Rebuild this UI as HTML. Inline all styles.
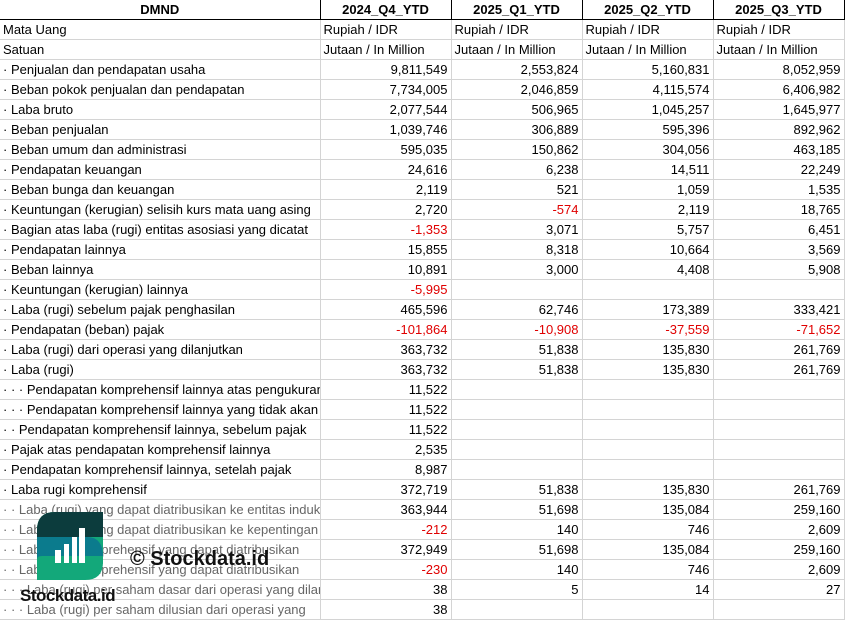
<!DOCTYPE html>
<html><head><meta charset="utf-8"><style>
body{margin:0;width:845px;height:621px;overflow:hidden;background:#fff;font-family:"Liberation Sans",Arial,sans-serif;font-size:13px;color:#000;position:relative}
table{border-collapse:collapse;table-layout:fixed;position:absolute;left:0;top:0;width:844px}
td{height:19px;padding:0 3px;border-right:1px solid #d4d4d4;border-bottom:1px solid #d4d4d4;white-space:nowrap;overflow:hidden;line-height:19px}
td.n{text-align:right}
tr.h td{font-weight:bold;text-align:center;border-right:1px solid #000;border-bottom:1px solid #000}
.r{color:#e00000}
.wm{position:absolute;left:130px;top:548px;font-weight:bold;font-size:20px;color:#111}
.wm2{position:absolute;left:20px;top:586px;font-weight:bold;font-size:17px;color:#111;letter-spacing:-0.5px}
</style></head><body>
<table>
<colgroup><col style="width:320px"><col style="width:131px"><col style="width:131px"><col style="width:131px"><col style="width:131px"></colgroup>
<tr class="h"><td>DMND</td><td>2024_Q4_YTD</td><td>2025_Q1_YTD</td><td>2025_Q2_YTD</td><td>2025_Q3_YTD</td></tr>
<tr><td>Mata Uang</td><td>Rupiah / IDR</td><td>Rupiah / IDR</td><td>Rupiah / IDR</td><td>Rupiah / IDR</td></tr>
<tr><td>Satuan</td><td>Jutaan / In Million</td><td>Jutaan / In Million</td><td>Jutaan / In Million</td><td>Jutaan / In Million</td></tr>
<tr><td>· Penjualan dan pendapatan usaha</td><td class="n">9,811,549</td><td class="n">2,553,824</td><td class="n">5,160,831</td><td class="n">8,052,959</td></tr>
<tr><td>· Beban pokok penjualan dan pendapatan</td><td class="n">7,734,005</td><td class="n">2,046,859</td><td class="n">4,115,574</td><td class="n">6,406,982</td></tr>
<tr><td>· Laba bruto</td><td class="n">2,077,544</td><td class="n">506,965</td><td class="n">1,045,257</td><td class="n">1,645,977</td></tr>
<tr><td>· Beban penjualan</td><td class="n">1,039,746</td><td class="n">306,889</td><td class="n">595,396</td><td class="n">892,962</td></tr>
<tr><td>· Beban umum dan administrasi</td><td class="n">595,035</td><td class="n">150,862</td><td class="n">304,056</td><td class="n">463,185</td></tr>
<tr><td>· Pendapatan keuangan</td><td class="n">24,616</td><td class="n">6,238</td><td class="n">14,511</td><td class="n">22,249</td></tr>
<tr><td>· Beban bunga dan keuangan</td><td class="n">2,119</td><td class="n">521</td><td class="n">1,059</td><td class="n">1,535</td></tr>
<tr><td>· Keuntungan (kerugian) selisih kurs mata uang asing</td><td class="n">2,720</td><td class="n r">-574</td><td class="n">2,119</td><td class="n">18,765</td></tr>
<tr><td>· Bagian atas laba (rugi) entitas asosiasi yang dicatat</td><td class="n r">-1,353</td><td class="n">3,071</td><td class="n">5,757</td><td class="n">6,451</td></tr>
<tr><td>· Pendapatan lainnya</td><td class="n">15,855</td><td class="n">8,318</td><td class="n">10,664</td><td class="n">3,569</td></tr>
<tr><td>· Beban lainnya</td><td class="n">10,891</td><td class="n">3,000</td><td class="n">4,408</td><td class="n">5,908</td></tr>
<tr><td>· Keuntungan (kerugian) lainnya</td><td class="n r">-5,995</td><td></td><td></td><td></td></tr>
<tr><td>· Laba (rugi) sebelum pajak penghasilan</td><td class="n">465,596</td><td class="n">62,746</td><td class="n">173,389</td><td class="n">333,421</td></tr>
<tr><td>· Pendapatan (beban) pajak</td><td class="n r">-101,864</td><td class="n r">-10,908</td><td class="n r">-37,559</td><td class="n r">-71,652</td></tr>
<tr><td>· Laba (rugi) dari operasi yang dilanjutkan</td><td class="n">363,732</td><td class="n">51,838</td><td class="n">135,830</td><td class="n">261,769</td></tr>
<tr><td>· Laba (rugi)</td><td class="n">363,732</td><td class="n">51,838</td><td class="n">135,830</td><td class="n">261,769</td></tr>
<tr><td>· · · Pendapatan komprehensif lainnya atas pengukuran</td><td class="n">11,522</td><td></td><td></td><td></td></tr>
<tr><td>· · · Pendapatan komprehensif lainnya yang tidak akan</td><td class="n">11,522</td><td></td><td></td><td></td></tr>
<tr><td>· · Pendapatan komprehensif lainnya, sebelum pajak</td><td class="n">11,522</td><td></td><td></td><td></td></tr>
<tr><td>· Pajak atas pendapatan komprehensif lainnya</td><td class="n">2,535</td><td></td><td></td><td></td></tr>
<tr><td>· Pendapatan komprehensif lainnya, setelah pajak</td><td class="n">8,987</td><td></td><td></td><td></td></tr>
<tr><td>· Laba rugi komprehensif</td><td class="n">372,719</td><td class="n">51,838</td><td class="n">135,830</td><td class="n">261,769</td></tr>
<tr><td style="color:#666">· · Laba (rugi) yang dapat diatribusikan ke entitas induk</td><td class="n">363,944</td><td class="n">51,698</td><td class="n">135,084</td><td class="n">259,160</td></tr>
<tr><td style="color:#666">· · Laba (rugi) yang dapat diatribusikan ke kepentingan</td><td class="n r">-212</td><td class="n">140</td><td class="n">746</td><td class="n">2,609</td></tr>
<tr><td style="color:#666">· · Laba rugi komprehensif yang dapat diatribusikan</td><td class="n">372,949</td><td class="n">51,698</td><td class="n">135,084</td><td class="n">259,160</td></tr>
<tr><td style="color:#666">· · Laba rugi komprehensif yang dapat diatribusikan</td><td class="n r">-230</td><td class="n">140</td><td class="n">746</td><td class="n">2,609</td></tr>
<tr><td style="color:#666">· · · Laba (rugi) per saham dasar dari operasi yang dilanjutkan</td><td class="n">38</td><td class="n">5</td><td class="n">14</td><td class="n">27</td></tr>
<tr><td style="color:#666">· · · Laba (rugi) per saham dilusian dari operasi yang</td><td class="n">38</td><td></td><td></td><td></td></tr>
</table>
<svg style="position:absolute;left:37px;top:512px" width="67" height="68" viewBox="0 0 67 68">
<defs><clipPath id="c"><path d="M18 0H66V50Q66 68 48 68H0V18Q0 0 18 0Z"/></clipPath></defs>
<g clip-path="url(#c)">
<rect width="67" height="68" fill="#13a87a"/>
<path d="M0 25H50Q66 25 66 45V50H0Z" fill="#0b7b8d"/>
<path d="M0 47Q0 44 5 44H66V52H0Z" fill="#13a87a"/>
<rect width="67" height="25" fill="#0c3c3d"/>
</g>
<rect x="18" y="38" width="6" height="13" fill="#fff"/>
<rect x="27" y="32" width="5" height="19" fill="#fff"/>
<rect x="35" y="25" width="5" height="26" fill="#fff"/>
<rect x="42" y="16" width="6" height="35" fill="#fff"/>
</svg>
<div class="wm">© Stockdata.id</div>
<div class="wm2">Stockdata.id</div>
</body></html>
